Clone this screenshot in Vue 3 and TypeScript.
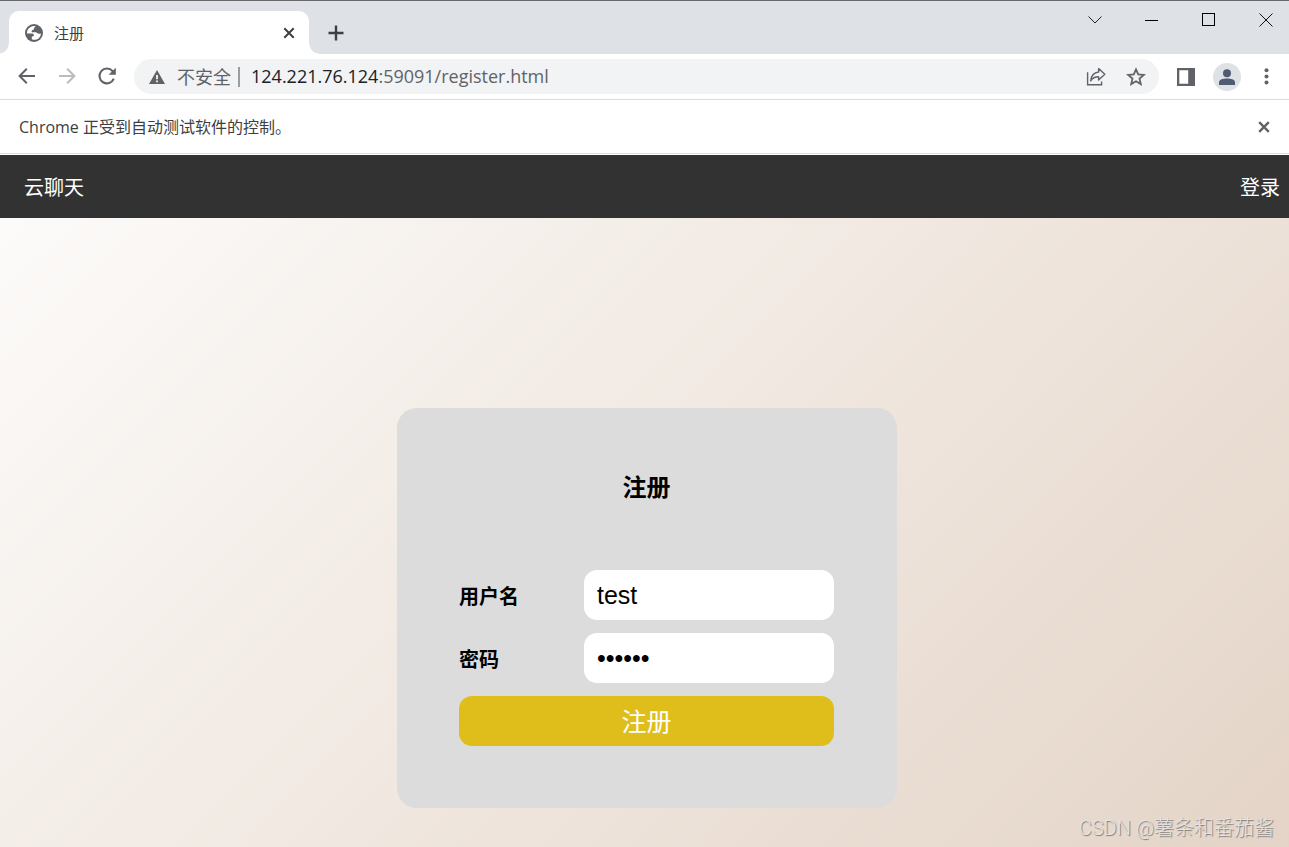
<script setup lang="ts">
import { ref } from 'vue'

const username = ref('test')
const password = ref('123456')
</script>

<template>
  <div class="window">
    <header class="tabstrip">
      <div class="tab">
        <svg class="icon" width="20" height="20" viewBox="0 0 20 20">
          <circle cx="10" cy="10" r="9" fill="#5f6368" />
          <path fill="#fff" d="M11.6 3.1C8.4 2.4 4.8 4.2 3.5 7.2C3 8.5 2.9 9.6 3 10.6H7.6C9.2 10.6 9.8 11.2 9.8 12.2C9.8 13.2 9 13.6 7.8 13.6V16.3C10 17.2 12.8 16.9 14.6 15.4C16 14.2 16.9 12.4 17 10.6C16 10.9 14.9 10.8 13.9 10.4C12.8 9.9 12.6 9.2 11.4 9.2H8.3C7.6 9.2 7.4 8.4 7.8 7.8C8.3 7 9.1 7.1 9.7 6.6C10.5 6 9.8 5 10.5 4.3C10.9 3.9 11.4 3.8 11.6 3.1Z" />
        </svg>
        <span class="tab-title">注册</span>
        <button class="plain" type="button" aria-label="关闭标签页">
          <svg width="12" height="12" viewBox="0 0 12 12"><path d="M1.3 1.3L10.7 10.7M10.7 1.3L1.3 10.7" stroke="#3c4043" stroke-width="2" fill="none" /></svg>
        </button>
      </div>
      <button class="plain new-tab" type="button" aria-label="新标签页">
        <svg width="16" height="16" viewBox="0 0 16 16"><path d="M8 .5V15.5M.5 8H15.5" stroke="#3c4043" stroke-width="2.4" /></svg>
      </button>
      <div class="controls">
        <button class="plain" type="button" aria-label="搜索标签页">
          <svg width="14" height="14" viewBox="0 0 14 14"><path d="M.5 3.5L7 10L13.5 3.5" stroke="#222" fill="none" /></svg>
        </button>
        <button class="plain" type="button" aria-label="最小化">
          <svg width="14" height="14" viewBox="0 0 14 14"><path d="M0 7.5H13" stroke="#000" /></svg>
        </button>
        <button class="plain" type="button" aria-label="最大化">
          <svg width="14" height="14" viewBox="0 0 14 14"><rect x=".5" y=".5" width="12" height="12" stroke="#000" fill="none" /></svg>
        </button>
        <button class="plain" type="button" aria-label="关闭">
          <svg width="14" height="14" viewBox="0 0 14 14"><path d="M.5 .5L13.5 13.5M13.5 .5L.5 13.5" stroke="#111" fill="none" /></svg>
        </button>
      </div>
    </header>

    <div class="toolbar">
      <button class="plain" type="button" aria-label="后退">
        <svg width="20" height="20" viewBox="0 0 20 20"><path d="M18 9H3M9.8 1.8L2.6 9L9.8 16.2" stroke="#5f6368" stroke-width="2" fill="none" /></svg>
      </button>
      <button class="plain" type="button" aria-label="前进">
        <svg width="20" height="20" viewBox="0 0 20 20"><path d="M2 9H17M10.2 1.8L17.4 9L10.2 16.2" stroke="#babcbe" stroke-width="2" fill="none" /></svg>
      </button>
      <button class="plain" type="button" aria-label="重新加载">
        <svg width="20" height="20" viewBox="0 0 20 20"><path d="M16.8 11.6A7.4 7.4 0 1 1 15.6 4.2L17 5.8" stroke="#5f6368" stroke-width="2.1" fill="none" /><path d="M18.8 .8V7.8H11.6Z" fill="#5f6368" /></svg>
      </button>
      <div class="omnibox">
        <svg class="warn" width="16" height="14" viewBox="0 0 16 14"><path d="M8 0L16 14H0Z" fill="#5f6368" /><path d="M8 5V9.2M8 10.6V12.3" stroke="#fff" stroke-width="1.7" /></svg>
        <span class="insecure">不安全</span>
        <div class="url" role="textbox" aria-label="地址"><b>124.221.76.124</b>:59091/register.html</div>
        <button class="plain" type="button" aria-label="分享">
          <svg width="20" height="20" viewBox="0 0 20 20"><path d="M1.6 5.2V17.8H15.6V14.6" stroke="#5f6368" stroke-width="1.4" fill="none" /><path d="M12.6 1.6L18.8 7.3L12.6 13V9.8C8.8 9.8 6.4 11 4.7 13.8C5.2 9 7.8 5.6 12.6 5Z" stroke="#5f6368" stroke-width="1.4" fill="none" stroke-linejoin="round" /></svg>
        </button>
        <button class="plain" type="button" aria-label="添加书签">
          <svg width="20" height="20" viewBox="0 0 20 20"><path d="M10 2.4L12.2 7.4L17.8 7.9L13.5 11.6L14.8 17.1L10 14.2L5.2 17.1L6.5 11.6L2.2 7.9L7.8 7.4Z" stroke="#5f6368" stroke-width="1.8" fill="none" /></svg>
        </button>
      </div>
      <button class="plain" type="button" aria-label="侧边栏">
        <svg width="18" height="18" viewBox="0 0 18 18"><path fill="#5f6368" fill-rule="evenodd" d="M0 0H18V18H0ZM2.3 2.3V15.7H11.2V2.3Z" /></svg>
      </button>
      <button class="plain avatar" type="button" aria-label="个人资料">
        <svg width="28" height="28" viewBox="0 0 28 28"><circle cx="14" cy="10.3" r="4" fill="#4f5b70" /><path d="M6 22V19.3C6 16.6 10.5 15.6 14 15.6S22 16.6 22 19.3V22Z" fill="#4f5b70" /></svg>
      </button>
      <button class="plain" type="button" aria-label="菜单">
        <svg width="20" height="20" viewBox="0 0 20 20" fill="#5f6368"><circle cx="9.5" cy="3.2" r="2" /><circle cx="9.5" cy="9.4" r="2" /><circle cx="9.5" cy="15.6" r="2" /></svg>
      </button>
    </div>

    <div class="infobar">
      <span>Chrome 正受到自动测试软件的控制。</span>
      <button class="plain" type="button" aria-label="关闭提示">
        <svg width="12" height="12" viewBox="0 0 12 12"><path d="M1.2 1.2L10.8 10.8M10.8 1.2L1.2 10.8" stroke="#5f6368" stroke-width="2.4" fill="none" /></svg>
      </button>
    </div>

    <div class="page">
      <nav class="nav">
        <span>云聊天</span>
        <a href="#login">登录</a>
      </nav>
      <main class="content">
        <form class="card" @submit.prevent>
          <h3>注册</h3>
          <div class="row">
            <label for="username">用户名</label>
            <input id="username" v-model="username" type="text" />
          </div>
          <div class="row">
            <label for="password">密码</label>
            <input id="password" v-model="password" type="password" />
          </div>
          <button class="submit" type="submit">注册</button>
        </form>
      </main>
    </div>
    <div class="watermark">CSDN @薯条和番茄酱</div>
  </div>
</template>

<style>
body {
  margin: 0;
}
</style>

<style scoped>
.window {
  position: relative;
  display: flex;
  flex-direction: column;
  height: 100vh;
  overflow: hidden;
  box-sizing: border-box;
  border-top: 1px solid #66686b;
  background: #fff;
  font-family: "Open Sans", "Noto Sans CJK SC", sans-serif;
  color: #3c4043;
}
.plain {
  display: flex;
  align-items: center;
  justify-content: center;
  padding: 0;
  border: 0;
  background: none;
}
svg {
  display: block;
  flex: none;
}
.tabstrip {
  display: flex;
  align-items: flex-end;
  flex: none;
  height: 53px;
  padding-left: 9px;
  background: #dee1e6;
}
.tab {
  position: relative;
  display: flex;
  align-items: center;
  box-sizing: border-box;
  width: 300px;
  height: 43px;
  padding: 0 14px 0 15px;
  border-radius: 10px 10px 0 0;
  background: #fff;
}
.tab::before,
.tab::after {
  content: "";
  position: absolute;
  bottom: 0;
  width: 10px;
  height: 10px;
}
.tab::before {
  right: 100%;
  background: radial-gradient(circle at 0 0, #dee1e6 9px, #fff 10px);
}
.tab::after {
  left: 100%;
  background: radial-gradient(circle at 100% 0, #dee1e6 9px, #fff 10px);
}
.tab-title {
  flex: 1;
  margin-left: 10px;
  font-size: 15px;
  line-height: 20px;
}
.new-tab {
  width: 34px;
  height: 43px;
  margin-left: 10px;
}
.controls {
  display: flex;
  align-self: flex-start;
  margin: 0 -5px 0 auto;
}
.controls .plain {
  width: 57px;
  height: 38px;
}
.toolbar {
  display: flex;
  align-items: center;
  flex: none;
  gap: 20px;
  height: 45px;
  padding: 0 12px 0 17px;
  border-bottom: 1px solid #dadce0;
}
.omnibox {
  display: flex;
  align-items: center;
  flex: 1;
  gap: 20px;
  box-sizing: border-box;
  height: 35px;
  margin: 0 -2px 0 -3px;
  padding: 0 13px 0 15px;
  border-radius: 18px;
  background: #f1f3f4;
  font-size: 18px;
  line-height: 24px;
  color: #5f6368;
}
.insecure {
  margin-left: -8px;
  padding-right: 7px;
  border-right: 2px solid #9a9da1;
  line-height: 20px;
}
.url {
  flex: 1;
  margin-left: -9px;
  padding-bottom: 2px;
  white-space: nowrap;
}
.url b {
  font-weight: 400;
  color: #202124;
}
.avatar {
  margin: 0 -4px 0 -2px;
  border-radius: 50%;
  background: #dee1e6;
}
.infobar {
  display: flex;
  align-items: center;
  justify-content: space-between;
  flex: none;
  height: 53px;
  margin-bottom: 1px;
  padding: 0 19px;
  border-bottom: 1px solid #dadce0;
  font-size: 16px;
}
.infobar span {
  padding-bottom: 2px;
}
.page {
  flex: none;
  background: linear-gradient(135deg, #fdfcfb, #e2d1c3);
}
.nav {
  display: flex;
  align-items: center;
  justify-content: space-between;
  height: 63px;
  padding: 0 9px 0 24px;
  background: #323232;
  color: #fff;
  font-size: 20px;
}
.nav a {
  color: #fff;
  text-decoration: none;
}
.content {
  display: flex;
  justify-content: center;
  padding: 190px 0 190px 5px;
}
.card {
  display: flex;
  flex-direction: column;
  gap: 13px;
  box-sizing: border-box;
  width: 500px;
  padding: 62px 63px 62px 62px;
  border-radius: 20px;
  background: #dcdcdc;
  color: #000;
}
h3 {
  margin: 0 0 54px;
  font-size: 24px;
  line-height: 33px;
  text-align: center;
}
.row {
  display: flex;
  align-items: center;
}
.row label {
  width: 125px;
  font-size: 20px;
  font-weight: 700;
}
.row input {
  flex: 1;
  min-width: 0;
  box-sizing: border-box;
  height: 50px;
  padding: 0 13px;
  border: 0;
  border-radius: 13px;
  background: #fff;
  color: #000;
  font-family: "Liberation Sans", sans-serif;
  font-size: 25px;
}
.submit {
  height: 50px;
  padding: 0 0 2px;
  border: 0;
  border-radius: 13px;
  background: #dfbe1b;
  color: #fff;
  font-family: "Noto Sans CJK SC", sans-serif;
  font-size: 25px;
}
.watermark {
  position: absolute;
  right: 15px;
  bottom: 5px;
  color: #e6e4e2;
  font-family: Roboto, "Noto Sans CJK SC", sans-serif;
  font-size: 20px;
  font-weight: 300;
  line-height: 28px;
  text-shadow: 1px 1px 1px #777;
}
</style>
